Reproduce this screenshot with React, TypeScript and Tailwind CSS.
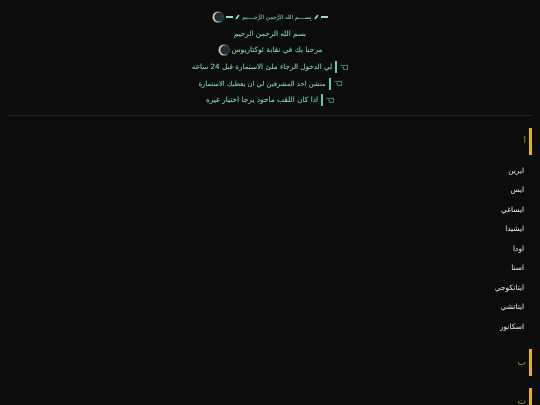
export default function App() {
  const items = ["ايرين", "ايس", "ايساغي", "ايشيدا", "اودا", "اسنا", "ايتاتكوجي", "ايتاتشي", "اسكانور"];
  const Moon = () => (
    <svg width="12" height="12" viewBox="0 0 12 12" className="shrink-0">
      <circle cx="6" cy="6" r="5.5" fill="#d8cf9c" />
      <circle cx="7" cy="6" r="4.7" fill="#1d2f3a" />
    </svg>
  );
  const Pencil = () => (
    <svg width="5" height="6" viewBox="0 0 5 6" className="shrink-0">
      <path d="M0.5 5.5 L1 3.6 L3.4 0.6 L4.6 1.6 L2.2 4.7 Z" fill="#8fe6c4" />
    </svg>
  );
  const Hand = () => (
    <svg width="8" height="7" viewBox="0 0 8 7" className="shrink-0" fill="none" stroke="#4d8f78" strokeWidth="0.9">
      <path d="M0.5 1.5 H5 L7.5 1 V5.5 H3.5 V3.2 H2" />
    </svg>
  );
  const Line = ({ text, size }: { text: string; size: string }) => (
    <div className="flex h-[16.5px] items-center justify-center gap-[3px]" dir="rtl">
      <Hand />
      <span className="h-[12px] w-[2px] bg-[#62cfa6]" />
      <span className={size}>{text}</span>
    </div>
  );
  return (
    <div className="h-[405px] w-[540px] overflow-hidden bg-[#0c0c0c] font-['DejaVu_Sans',sans-serif] [will-change:transform]">
      <div className="flex flex-col items-center pt-[9px] text-[7.2px] leading-[16px] text-[#86e0bc]">
        <div className="flex h-[16px] items-center justify-center gap-[2px]" dir="rtl">
          <span className="h-[2px] w-[7px] bg-[#8fe6c4]" />
          <Pencil />
          <span className="text-[5.6px]">بِســــم الله الرَّحمن الرَّجــــيم</span>
          <Pencil />
          <span className="h-[2px] w-[7px] bg-[#8fe6c4]" />
          <Moon />
        </div>
        <div className="mt-px h-[16px]" dir="rtl">بسم الله الرحمن الرحيم</div>
        <div className="flex h-[16px] items-center justify-center gap-[2px]" dir="rtl">
          <span className="text-[7.4px]">مرحبا بك في نقابة ئوكتاريوس</span>
          <Moon />
        </div>
        <div className="mt-px" />
        <Line size="text-[7.2px]" text="لي الدخول الرجاء ملئ الاستمارة قبل 24 ساعه" />
        <Line size="text-[6.8px]" text="منشن احد المشرفين لي ان يعطيك الاستمارة" />
        <Line size="text-[7.4px]" text="اذا كان اللقب ماخوذ يرجا اختيار غيره" />
      </div>
      <div className="mx-[8px] mt-[6px] h-px bg-[#262626]" />
      <div className="flex flex-col pt-[12px]">
        <div className="flex h-[27px] items-center justify-end gap-[3px] pr-[8px] text-[9px] text-[#b8962a]">
          <span>ا</span>
          <span className="h-full w-[3px] bg-[#eab308]" />
        </div>
        <div className="mt-[6px] flex flex-col pr-[16px] text-right text-[7.4px] leading-[19.5px] text-[#e8e8e8]" dir="rtl">
          {items.map((t) => (
            <div key={t} className="h-[19.5px]">{t}</div>
          ))}
        </div>
        <div className="mt-[13px] flex h-[27px] items-center justify-end gap-[3px] pr-[8px] text-[9px] text-[#b8962a]">
          <span>ب</span>
          <span className="h-full w-[3px] bg-[#eab308]" />
        </div>
        <div className="mt-[12px] flex h-[27px] items-center justify-end gap-[3px] pr-[8px] text-[9px] text-[#b8962a]">
          <span>ت</span>
          <span className="h-full w-[3px] bg-[#eab308]" />
        </div>
      </div>
    </div>
  );
}
